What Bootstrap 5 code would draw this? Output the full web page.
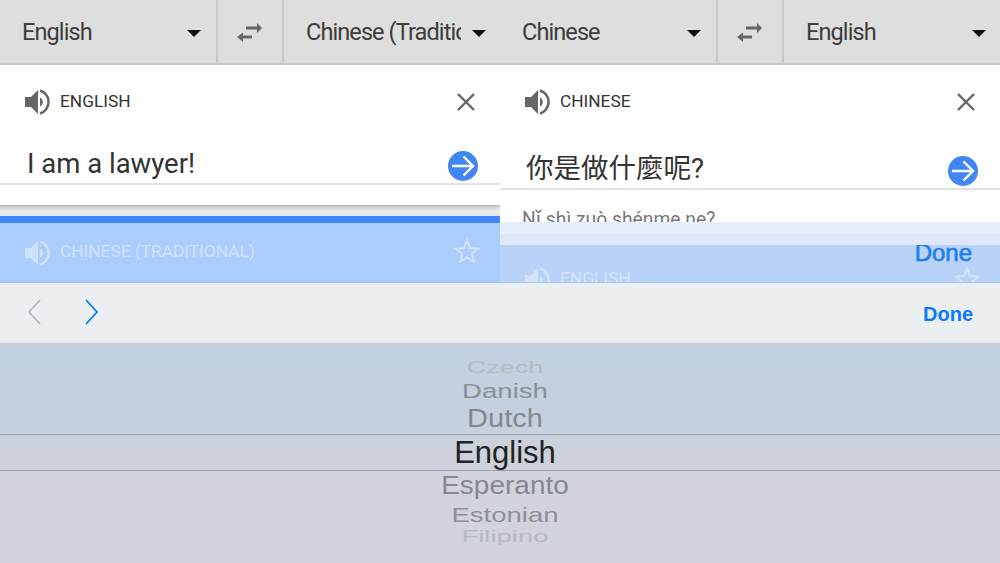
<!DOCTYPE html>
<html lang="en"><head><meta charset="utf-8"><title>Translate</title>
<link href="https://cdn.jsdelivr.net/npm/bootstrap@5.3.0/dist/css/bootstrap.min.css" rel="stylesheet">
<style>
html,body{width:1000px;height:563px;overflow:hidden;background:#fff;font-family:Roboto,"Noto Sans CJK TC",sans-serif;color:#333}
.top-split{height:283px}
.pane{width:500px;height:283px;overflow:hidden}
.lang-bar{height:65px;background:#dedede;border-bottom:2px solid #c9c9c9}
.lang-a{width:216px;padding:0 15px 0 22px}
.lang-b{width:216px;padding:0 14px 0 22px}
.swap{width:68px;border-left:2px solid #c9c9c9;border-right:2px solid #c9c9c9}
.lang-name{font-size:23.500px;letter-spacing:-.9px;color:#3c3c3c;white-space:nowrap;overflow:hidden;line-height:30px;margin-top:1px}
.lang-b .lang-name{width:155px;flex:none}
.caret-d{width:0;height:0;border-left:7px solid transparent;border-right:7px solid transparent;border-top:7px solid #111;flex:none;margin-top:4px}
.src-head{height:73px;padding:0 25px 0 24px}
.src-label{font-size:17.300px;color:#333;margin-left:10px;line-height:20px;margin-top:-1px}
.src-text{height:47px;padding-left:27px;font-size:27.500px;line-height:52px;color:#333;border-bottom:2px solid #e2e2e2;position:relative}
.right .src-text{height:52px;line-height:62px;padding-left:26px}
.go{position:absolute;right:22px;bottom:2px;width:30px;height:30px}
.left-rest{height:20px;background:#fff}
.left-gap{height:11px;background:linear-gradient(180deg,#b4b4b4 0%,#dadada 25%,#ececec 60%,#e6e6e6 100%)}
.blue-rule{height:7px;background:#4285f4}
.tgt{height:60px;background:#abcdfb;padding:0 20px 0 24px;border-bottom:1px solid #9dbff0}
.tgt-label{font-size:17.300px;color:#cfe1fc;margin-left:10px;margin-top:-1px}
.tgt .st{margin-top:-4px}
.translit{height:32px;padding:18px 0 0 22px;font-size:19.300px;line-height:24px;color:#777;overflow:hidden}
.band-a{height:12px;background:#e6eefc}
.band-b{height:11px;background:#dfe8f9}
.tgt2{height:38px;background:#b8d2fa;border-bottom:1px solid #a5c2ee;position:relative;overflow:hidden}
.tgt2 .spk{position:absolute;left:24px;top:22px}
.tgt2 .tgt-label{position:absolute;left:60px;top:23px;margin:0;line-height:20px;color:#d5e4fb}
.tgt2 .st{position:absolute;right:20px;top:21px}
.done-ghost{position:absolute;right:28px;top:-7px;font-family:"Liberation Sans",sans-serif;font-size:24px;line-height:30px;color:#1a80f0;-webkit-text-stroke:.6px #1a80f0}
.accessory{height:60px;background:#ebeff2;padding:0 27px 0 27px;border-bottom:1px solid #dfe2e6}
.nav-arrows{gap:44px;margin-top:-2px}
.done-main{font-family:"Liberation Sans",sans-serif;font-weight:700;font-size:20px;color:#0a7aff;margin-top:3px}
.picker{height:220px;background:linear-gradient(180deg,#c0d0e1 0%,#c4d0e0 35%,#d1d4db 62%,#d0d3dc 100%);font-family:"Liberation Sans",sans-serif;padding:14px 0 0 10px;text-align:center}
.opt{display:block;transform-origin:center}
.opt-czech{font-size:27px;line-height:22px;color:#b4bac2;transform:scaleY(.6)}
.opt-danish{font-size:27.600px;line-height:23px;color:#8b8f96;transform:scaleY(.75)}
.opt-dutch{font-size:29px;line-height:32px;color:#83878e;transform:scaleY(.88)}
.sel-band{height:37px;margin-left:-10px;padding-left:10px;border-top:1px solid #9aa2ab;border-bottom:1px solid #9aa2ab;line-height:35px;font-size:31px;color:#222;background:rgba(205,208,218,.6)}
.opt-esper{font-size:28px;line-height:30px;color:#85888e;transform:scaleY(.9)}
.opt-eston{font-size:27.500px;line-height:28px;color:#8d9096;transform:scaleY(.75)}
.opt-filip{font-size:27.500px;line-height:16px;color:#b6b9c0;transform:scaleY(.6)}
</style></head><body>
<svg width="0" height="0" class="position-absolute"><defs>
<symbol id="swap" viewBox="0 0 26 22"><path d="M9 5.500h11V2l5 5-5 5V8.500H9zM15 14.500H6V11.500L0 16l6 5v-3.500h9z" fill="#666"/></symbol>
<symbol id="spk" viewBox="0 0 26 26"><path d="M1 8h6l7-7v24l-7-7H1z" fill="currentColor"/><path d="M16 8.500a5 5 0 0 1 0 9z" fill="currentColor"/><path d="M16 1.500A12 12 0 0 1 16 24.500" fill="none" stroke="currentColor" stroke-width="2.500"/></symbol>
<symbol id="star" viewBox="0 0 26 25"><path d="M13 2.500l3 7.500 8 .6-6.200 5.200 2 7.900-6.800-4.300-6.800 4.300 2-7.900L2 10.600l8-.6z" fill="none" stroke="currentColor" stroke-width="2"/></symbol>
<symbol id="gocirc" viewBox="0 0 30 30"><circle cx="15" cy="15" r="15" fill="#4285f4"/><path d="M4 15h21M15.500 5.500L25 15l-9.500 9.500" fill="none" stroke="#fff" stroke-width="2.400"/></symbol>
<symbol id="xm" viewBox="0 0 18 18"><path d="M1 1l16 16M17 1L1 17" stroke="#666" stroke-width="2.400"/></symbol>
</defs></svg>
<div class="d-flex top-split">
 <section class="pane left">
  <div class="lang-bar d-flex">
   <div class="lang-a d-flex align-items-center justify-content-between"><span class="lang-name">English</span><i class="caret-d"></i></div>
   <div class="swap d-flex align-items-center justify-content-center"><svg width="26" height="22"><use href="#swap"/></svg></div>
   <div class="lang-b d-flex align-items-center justify-content-between"><span class="lang-name">Chinese (Traditional)</span><i class="caret-d"></i></div>
  </div>
  <div class="src-head d-flex align-items-center justify-content-between">
   <div class="d-flex align-items-center" style="color:#666"><svg width="26" height="26"><use href="#spk"/></svg><span class="src-label">ENGLISH</span></div>
   <svg width="18" height="18"><use href="#xm"/></svg>
  </div>
  <div class="src-text">I am a lawyer!<svg class="go"><use href="#gocirc"/></svg></div>
  <div class="left-rest"></div>
  <div class="left-gap"></div>
  <div class="blue-rule"></div>
  <div class="tgt d-flex align-items-center justify-content-between" style="color:#cfe1fc">
   <div class="d-flex align-items-center"><svg width="26" height="26"><use href="#spk"/></svg><span class="tgt-label">CHINESE (TRADITIONAL)</span></div>
   <svg class="st" width="26" height="25"><use href="#star"/></svg>
  </div>
 </section>
 <section class="pane right">
  <div class="lang-bar d-flex">
   <div class="lang-a d-flex align-items-center justify-content-between"><span class="lang-name">Chinese</span><i class="caret-d"></i></div>
   <div class="swap d-flex align-items-center justify-content-center"><svg width="26" height="22"><use href="#swap"/></svg></div>
   <div class="lang-b d-flex align-items-center justify-content-between"><span class="lang-name">English</span><i class="caret-d"></i></div>
  </div>
  <div class="src-head d-flex align-items-center justify-content-between">
   <div class="d-flex align-items-center" style="color:#666"><svg width="26" height="26"><use href="#spk"/></svg><span class="src-label">CHINESE</span></div>
   <svg width="18" height="18"><use href="#xm"/></svg>
  </div>
  <div class="src-text">你是做什麼呢?<svg class="go"><use href="#gocirc"/></svg></div>
  <div class="translit">Nǐ shì zuò shénme ne?</div>
  <div class="band-a"></div>
  <div class="band-b"></div>
  <div class="tgt2" style="color:#d5e4fb">
   <svg class="spk" width="26" height="26"><use href="#spk"/></svg><span class="tgt-label">ENGLISH</span>
   <svg class="st" width="26" height="25"><use href="#star"/></svg>
   <span class="done-ghost">Done</span>
  </div>
 </section>
</div>
<div class="accessory d-flex align-items-center justify-content-between">
 <div class="nav-arrows d-flex align-items-center"><svg width="14" height="26" viewBox="0 0 14 26"><path d="M13 1L2 13l11 12" fill="none" stroke="#b4b8bc" stroke-width="1.800"/></svg><svg width="14" height="26" viewBox="0 0 14 26"><path d="M1 1l11 12L1 25" fill="none" stroke="#0a7aff" stroke-width="1.800"/></svg></div>
 <span class="done-main">Done</span>
</div>
<div class="picker">
 <span class="opt opt-czech">Czech</span>
 <span class="opt opt-danish">Danish</span>
 <span class="opt opt-dutch">Dutch</span>
 <div class="sel-band">English</div>
 <span class="opt opt-esper">Esperanto</span>
 <span class="opt opt-eston">Estonian</span>
 <span class="opt opt-filip">Filipino</span>
</div>
<script src="https://cdn.jsdelivr.net/npm/bootstrap@5.3.0/dist/js/bootstrap.bundle.min.js"></script>
</body></html>
